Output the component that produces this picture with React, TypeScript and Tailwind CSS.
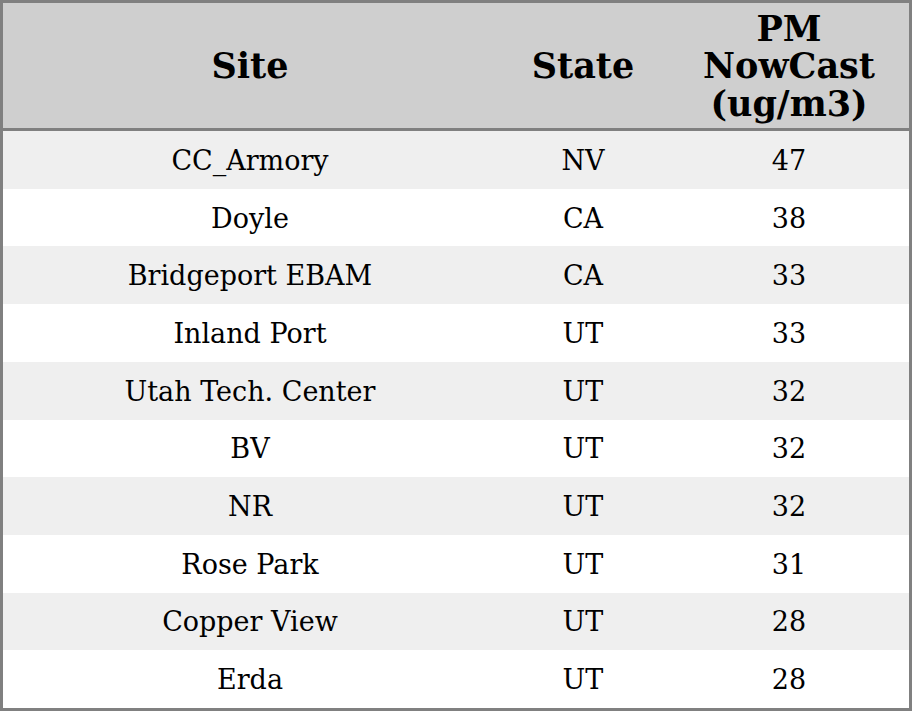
const rows = [
  { site: 'CC_Armory', state: 'NV', pm: 47 },
  { site: 'Doyle', state: 'CA', pm: 38 },
  { site: 'Bridgeport EBAM', state: 'CA', pm: 33 },
  { site: 'Inland Port', state: 'UT', pm: 33 },
  { site: 'Utah Tech. Center', state: 'UT', pm: 32 },
  { site: 'BV', state: 'UT', pm: 32 },
  { site: 'NR', state: 'UT', pm: 32 },
  { site: 'Rose Park', state: 'UT', pm: 31 },
  { site: 'Copper View', state: 'UT', pm: 28 },
  { site: 'Erda', state: 'UT', pm: 28 },
]

export default function App() {
  return (
    <div
      className="w-[912px] h-[711px] flex flex-col border-[3px] border-[#808080] bg-white text-black"
      style={{ fontFamily: '"DejaVu Serif", serif' }}
    >
      <div className="h-[128px] shrink-0 grid grid-cols-[494px_172px_1fr] items-center bg-[#cfcfcf] border-b-[3px] border-[#808080] text-[35px] leading-[37.5px] font-bold text-center pt-[1px]">
        <div>Site</div>
        <div>State</div>
        <div>
          PM
          <br />
          NowCast
          <br />
          (ug/m3)
        </div>
      </div>
      <div className="flex-1 flex flex-col">
        {rows.map((r, i) => (
          <div
            key={r.site}
            className={`flex-1 grid grid-cols-[494px_172px_1fr] items-center text-center text-[27px] leading-none pt-[1px] ${
              i % 2 === 0 ? 'bg-[#efefef]' : 'bg-white'
            }`}
          >
            <div>{r.site}</div>
            <div>{r.state}</div>
            <div>{r.pm}</div>
          </div>
        ))}
      </div>
    </div>
  )
}
